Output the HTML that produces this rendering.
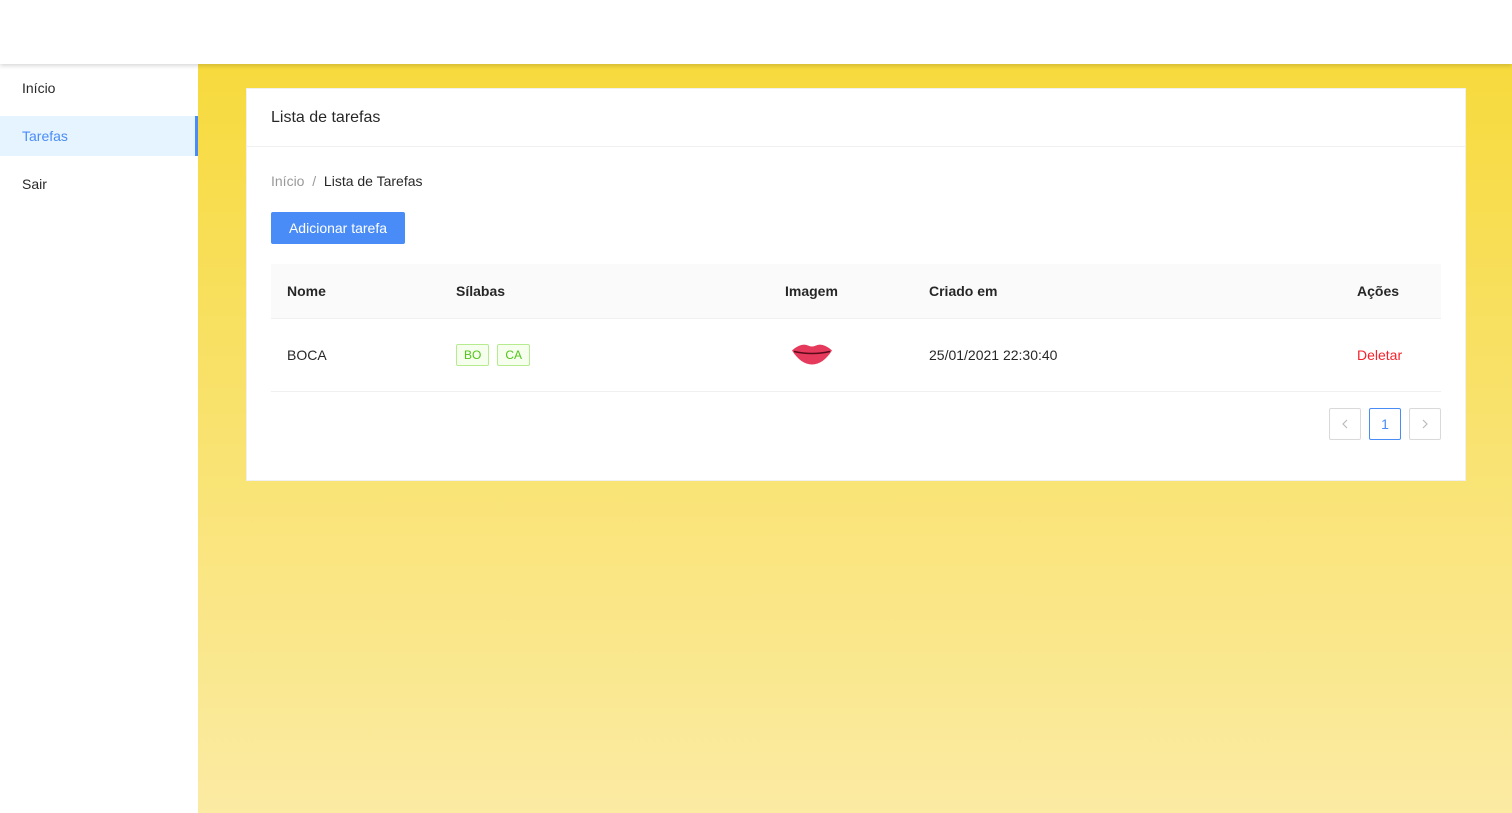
<!DOCTYPE html>
<html><head><meta charset="utf-8"><style>
*{box-sizing:border-box;margin:0;padding:0}
body{width:1512px;height:813px;overflow:hidden;font-family:"Liberation Sans",sans-serif;font-size:14px;color:rgba(0,0,0,.85);background:#fff;position:relative}
.hdr{position:absolute;left:0;top:0;width:1512px;height:64px;background:#fff;box-shadow:0 2px 4px rgba(0,0,0,.15);z-index:2}
.side{position:absolute;left:0;top:64px;width:198px;height:749px;background:#fff}
.side div{height:40px;line-height:40px;padding-left:22px;margin-top:8px}
.side div:first-child{margin-top:4px}
.side .a{background:#e6f4ff;color:#4a8cf7;border-right:3px solid #4a8cf7}
.main{position:absolute;left:198px;top:64px;width:1314px;height:749px;background:linear-gradient(#f7da3d,#fbeba3)}
.card{position:absolute;left:48px;top:24px;width:1220px;height:393px;background:#fff;border:1px solid #f0f0f0}
.ct{height:58px;line-height:58px;padding-left:24px;font-size:16px;border-bottom:1px solid #f0f0f0}
.bc{position:absolute;left:24px;top:84px;color:#999}
.bc b{font-weight:normal;color:rgba(0,0,0,.85)}
.btn{position:absolute;left:24px;top:123px;width:134px;height:32px;background:#4a8cf7;color:#fff;border-radius:2px;text-align:center;line-height:32px}
.tb{position:absolute;left:24px;top:175px;width:1170px}
.th{height:55px;background:#fafafa;border-bottom:1px solid #f0f0f0;position:relative;font-weight:bold}
.tr{height:73px;border-bottom:1px solid #f0f0f0;position:relative}
.th span,.tr span{position:absolute;top:50%;transform:translateY(-50%)}
.tag{display:inline-block;border:1px solid #b7eb8f;background:#f6ffed;color:#52c41a;font-size:12px;height:22px;line-height:20px;padding:0 7px;border-radius:2px;margin-right:8px;font-style:normal}
.pg{position:absolute;top:319px;width:32px;height:32px;border:1px solid #d9d9d9;border-radius:2px;text-align:center;line-height:30px;color:#bbb}
.pg svg{margin-top:10px}
</style></head><body>
<div class="hdr"></div>
<div class="side"><div>Início</div><div class="a">Tarefas</div><div>Sair</div></div>
<div class="main"><div class="card">
<div class="ct">Lista de tarefas</div>
<div class="bc">Início &nbsp;/&nbsp; <b>Lista de Tarefas</b></div>
<div class="btn">Adicionar tarefa</div>
<div class="tb">
<div class="th"><span style="left:16px">Nome</span><span style="left:185px">Sílabas</span><span style="left:514px">Imagem</span><span style="left:658px">Criado em</span><span style="left:1086px">Ações</span></div>
<div class="tr"><span style="left:16px">BOCA</span><span style="left:185px"><i class="tag">BO</i><i class="tag">CA</i></span>
<span style="left:520px"><svg width="42" height="24" viewBox="0 0 42 24"><path d="M1 9 Q10 1 17 4 Q21 6 25 4 Q32 1 41 9 Q32 23 21 23 Q10 23 1 9Z" fill="#e53a5c"/><path d="M3 10 Q21 14 39 10" stroke="#5a0a1a" stroke-width="1.5" fill="none"/></svg></span>
<span style="left:658px">25/01/2021 22:30:40</span><span style="left:1086px;color:#f5222d">Deletar</span></div>
</div>
<div class="pg" style="left:1082px"><svg width="10" height="10" viewBox="0 0 10 10"><path d="M7 1 L3 5 L7 9" stroke="#bbb" fill="none" stroke-width="1.2"/></svg></div>
<div class="pg" style="left:1122px;border-color:#4a8cf7;color:#4a8cf7">1</div>
<div class="pg" style="left:1162px"><svg width="10" height="10" viewBox="0 0 10 10"><path d="M3 1 L7 5 L3 9" stroke="#bbb" fill="none" stroke-width="1.2"/></svg></div>
</div></div>
</body></html>
